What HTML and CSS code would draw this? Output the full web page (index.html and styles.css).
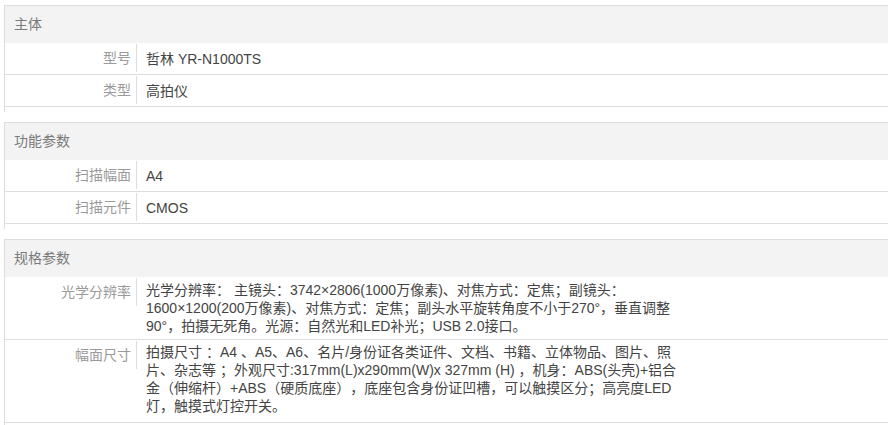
FILE: index.html
```html
<!DOCTYPE html>
<html lang="zh-CN">
<head>
    <meta charset="UTF-8">
    <meta name="viewport" content="width=device-width, initial-scale=1.0">
    <title>规格参数</title>
    <link rel="stylesheet" href="styles.css">
</head>
<body>
    <main class="spec">
        <section class="group">
            <h3 class="group-title">主体</h3>
            <div class="row">
                <div class="label">型号</div>
                <div class="value">哲林 YR-N1000TS</div>
            </div>
            <div class="row">
                <div class="label">类型</div>
                <div class="value">高拍仪</div>
            </div>
        </section>

        <section class="group">
            <h3 class="group-title">功能参数</h3>
            <div class="row">
                <div class="label">扫描幅面</div>
                <div class="value">A4</div>
            </div>
            <div class="row">
                <div class="label">扫描元件</div>
                <div class="value">CMOS</div>
            </div>
        </section>

        <section class="group">
            <h3 class="group-title">规格参数</h3>
            <div class="row">
                <div class="label">光学分辨率</div>
                <div class="value">光学分辨率： 主镜头：3742×2806(1000万像素)、对焦方式：定焦；副镜头：<br>1600×1200(200万像素)、对焦方式：定焦；副头水平旋转角度不小于270°，垂直调整<br>90°，拍摄无死角。光源：自然光和LED补光；USB 2.0接口。</div>
            </div>
            <div class="row">
                <div class="label">幅面尺寸</div>
                <div class="value tall">拍摄尺寸 ：A4 、A5、A6、名片/身份证各类证件、文档、书籍、立体物品、图片、照<br>片、杂志等 ；外观尺寸:317mm(L)x290mm(W)x 327mm (H) ，机身：ABS(头壳)+铝合<br>金（伸缩杆）+ABS（硬质底座），底座包含身份证凹槽，可以触摸区分；高亮度LED<br>灯，触摸式灯控开关。</div>
            </div>
        </section>
    </main>
</body>
</html>
```

FILE: styles.css
```css
body {
    font-family: "Liberation Sans", "Noto Sans CJK SC", sans-serif;
    font-size: 14px;
    margin: 0;
    padding: 0;
    background: #fff;
    text-spacing-trim: space-all;
}

.spec {
    padding: 5px 4px 0;
}

.group {
    border-top: 1px solid #ddd;
    border-left: 1px solid #ddd;
    padding-bottom: 5px;
    margin-bottom: 10px;
}

.group-title {
    margin: 0;
    height: 37px;
    line-height: 37px;
    padding-left: 9px;
    background: #f3f3f3;
    font-size: 14px;
    font-weight: normal;
    color: #7a7a7a;
}

.row {
    display: flex;
    align-items: center;
    min-height: 31px;
    border-bottom: 1px solid #ddd;
}

.label {
    align-self: flex-start;
    flex-shrink: 0;
    box-sizing: border-box;
    width: 132px;
    height: 28px;
    margin-top: 1px;
    line-height: 28px;
    padding-right: 5px;
    border-right: 1px solid #ddd;
    text-align: right;
    color: #9a9a9a;
}

.value {
    padding: 4px 0 4px 9px;
    line-height: 18px;
    color: #444;
}

.value.tall {
    padding-top: 3px;
    padding-bottom: 7px;
}
```
